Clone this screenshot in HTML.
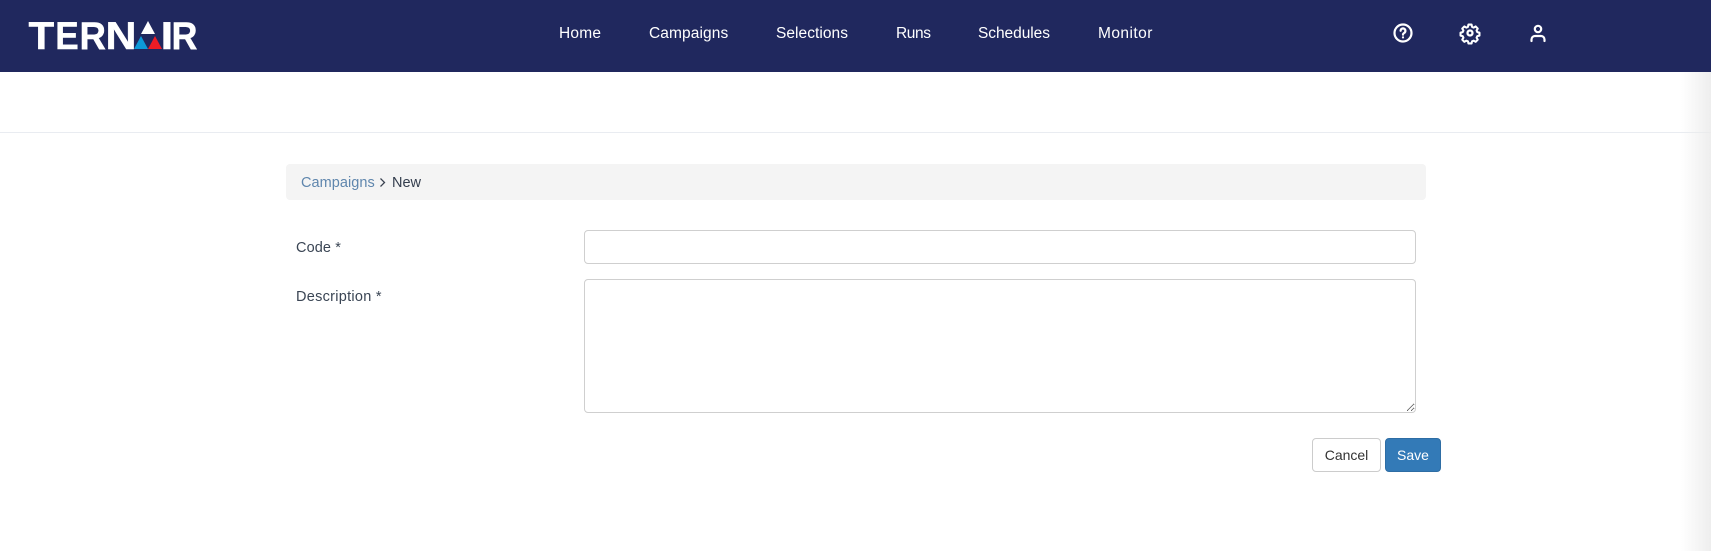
<!DOCTYPE html>
<html lang="en"><head><meta charset="utf-8"><title>Ternair</title>
<style>
*{box-sizing:border-box}
html,body{margin:0;padding:0;width:1711px;height:551px;overflow:hidden;background:#fff;font-family:"Liberation Sans",sans-serif;font-size:14px;color:#333}
header{position:absolute;left:0;top:0;width:1711px;height:72px;background:#20285e}
.nav{position:absolute;top:23px;height:22px;line-height:22px;color:#fff;font-size:15.5px;text-decoration:none;white-space:nowrap}
.t{position:absolute;white-space:nowrap;line-height:20px;height:20px;font-size:14.5px}
.rule{position:absolute;left:0;top:132px;width:1711px;height:1px;background:#e9ecf1}
.crumb{position:absolute;left:286px;top:164px;width:1140px;height:36px;background:#f4f4f4;border-radius:4px}
.in{position:absolute;left:584px;width:832px;background:#fff;border:1px solid #cfcfcf;border-radius:4px;margin:0;padding:0;display:block;outline:0}
textarea.in{resize:vertical}
.btn{position:absolute;top:438px;height:34px;border-radius:4px;font:14px "Liberation Sans",sans-serif;text-align:center;line-height:32px;padding:0}
.shade{position:absolute;right:0;top:72px;width:30px;height:479px;background:linear-gradient(to right,rgba(235,235,235,0),rgba(235,235,235,.85))}
.lg{font-family:"Liberation Sans",sans-serif;font-weight:700;font-size:38.5px;fill:#fff;stroke:#fff;stroke-width:.4px}
</style></head><body>
<header>
<svg style="position:absolute;left:0;top:0" width="220" height="72" viewBox="0 0 220 72">
<text class="lg" x="28.500" y="49" textLength="25.700" lengthAdjust="spacingAndGlyphs">T</text>
<text class="lg" x="55.300" y="49" textLength="23.500" lengthAdjust="spacingAndGlyphs">E</text>
<text class="lg" x="79.500" y="49" textLength="26.500" lengthAdjust="spacingAndGlyphs">R</text>
<text class="lg" x="105.500" y="49" textLength="31" lengthAdjust="spacingAndGlyphs">N</text>
<text class="lg" x="160.500" y="49" textLength="12.800" lengthAdjust="spacingAndGlyphs">I</text>
<text class="lg" x="171.500" y="49" textLength="26" lengthAdjust="spacingAndGlyphs">R</text>
<path d="M148 21 L155 34 H141 Z" fill="#fff"/>
<path d="M141 36 L148 49 H134 Z" fill="#0d9ad9"/>
<path d="M155 36 L162 49 H148 Z" fill="#ee1c25"/>
</svg>
<a class="nav" style="left:559px;letter-spacing:.2px">Home</a>
<a class="nav" style="left:649px;letter-spacing:.1px">Campaigns</a>
<a class="nav" style="left:776px;letter-spacing:.05px">Selections</a>
<a class="nav" style="left:896px;letter-spacing:-.4px">Runs</a>
<a class="nav" style="left:978px;letter-spacing:-.05px">Schedules</a>
<a class="nav" style="left:1098px;letter-spacing:.45px">Monitor</a>
<svg style="position:absolute;left:1391px;top:21px" width="24" height="24" viewBox="0 0 24 24" fill="none" stroke="#fff" stroke-width="2.200" stroke-linecap="round" stroke-linejoin="round">
<circle cx="12" cy="12" r="8.500"/><path d="M9.600 9.800a2.400 2.400 0 1 1 3.600 2.100c-.8.500-1.200 1-1.200 1.700"/><path d="M12 16.300v.1"/>
</svg>
<svg style="position:absolute;left:1458px;top:21px" width="24" height="24" viewBox="0 0 24 24" fill="none" stroke="#fff" stroke-width="2.300" stroke-linejoin="round">
<path d="M10.300 3h3.400l.6 2.600 1.700.8 2.300-1.300 2.300 2.400-1.300 2.200.8 1.700 2.400.6v3.300l-2.400.6-.8 1.700 1.300 2.200-2.300 2.400-2.300-1.300-1.700.8-.6 2.300h-3.400l-.6-2.300-1.700-.8-2.300 1.300-2.300-2.400 1.300-2.200-.8-1.700-2.400-.6v-3.300l2.400-.6.8-1.700-1.300-2.200 2.300-2.400 2.300 1.300 1.700-.8z" transform="translate(12 12) scale(.9) translate(-12 -12.400)"/>
<circle cx="12" cy="12" r="2.500"/>
</svg>
<svg style="position:absolute;left:1526px;top:21px" width="24" height="24" viewBox="0 0 24 24" fill="none" stroke="#fff" stroke-width="2.200" stroke-linecap="round" stroke-linejoin="round">
<circle cx="12" cy="8" r="3.200"/><path d="M5.500 20v-1.500a3.500 3.500 0 0 1 3.500-3.500h6a3.500 3.500 0 0 1 3.500 3.500V20"/>
</svg>
</header>
<div class="rule"></div>
<nav class="crumb"></nav>
<a class="t" style="left:301px;top:173px;color:#5f86ad;letter-spacing:.05px">Campaigns</a>
<svg style="position:absolute;left:378px;top:177px" width="9" height="11" viewBox="0 0 9 11" fill="none" stroke="#3a4250" stroke-width="1.300"><path d="M2.500 1.500 L6.500 5.500 L2.500 9.500"/></svg>
<span class="t" style="left:392px;top:173px;color:#333d4d">New</span>
<label class="t" style="left:296px;top:238px;color:#3a4554;letter-spacing:.1px">Code *</label>
<input class="in" style="top:230px;height:34px" type="text">
<label class="t" style="left:296px;top:287px;color:#3a4554;letter-spacing:.28px">Description *</label>
<textarea class="in" style="top:279px;height:134px"></textarea>
<button class="btn" style="left:1312px;width:69px;background:#fff;border:1px solid #ccc;color:#333">Cancel</button>
<button class="btn" style="left:1385px;width:56px;background:#337ab7;border:1px solid #2e6da4;color:#fff">Save</button>
<div class="shade"></div>
</body></html>
